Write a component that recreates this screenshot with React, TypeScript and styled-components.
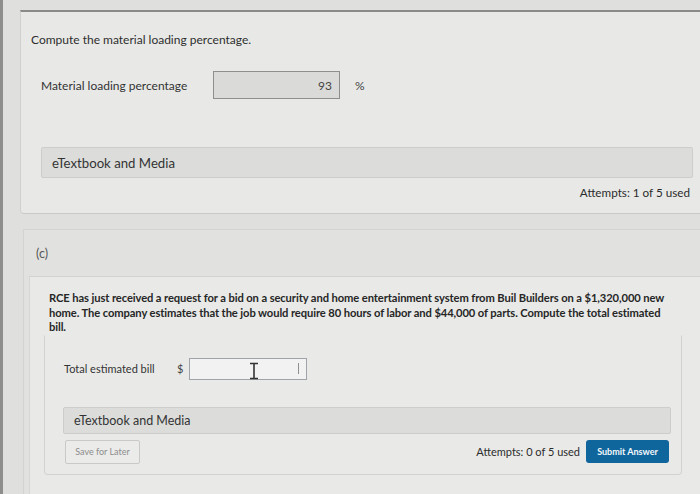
import React from "react";
import styled, { createGlobalStyle } from "styled-components";

const Global = createGlobalStyle`
  html, body { margin: 0; padding: 0; background: #dcdddb; }
  body { font-family: Lato, "Open Sans", "Liberation Sans", sans-serif; color: #2b2b2b; }
  * { box-sizing: border-box; }
`;

const Screen = styled.div`
  width: 700px;
  height: 494px;
  overflow: hidden;
  background: #dfe0de;
  border-left: 3px solid #8e8f8d;
  padding-top: 10px;
  display: flex;
  flex-direction: column;
`;

const PartCard = styled.section`
  margin-left: 17px;
  background: #e8e9e7;
  border-top: 2px solid #8a8b89;
  border-left: 1px solid #cfd0ce;
  border-bottom: 1px solid #c9cac8;
  border-bottom-left-radius: 4px;
  padding: 20px 0 14px 10px;
  display: flex;
  flex-direction: column;
`;

const Prompt = styled.p`
  margin: 0;
  font-size: 12px;
  line-height: 16px;
  color: #2e2e2e;
`;

const AnswerRow = styled.div<{ $indent?: number; $top?: number }>`
  display: flex;
  align-items: center;
  padding-left: ${(p) => p.$indent ?? 10}px;
  margin-top: ${(p) => p.$top ?? 0}px;
`;

const Label = styled.span<{ $w: number; $size?: number }>`
  width: ${(p) => p.$w}px;
  font-size: ${(p) => p.$size ?? 12}px;
  color: #333;
  flex-shrink: 0;
`;

const Unit = styled.span<{ $gap: number }>`
  margin: 0 ${(p) => p.$gap}px;
  font-size: 12px;
  color: #444;
`;

const NumBox = styled.div<{ $w: number; $h: number; $filled?: boolean }>`
  position: relative;
  width: ${(p) => p.$w}px;
  height: ${(p) => p.$h}px;
  background: ${(p) => (p.$filled ? "#dadbd9" : "#f1f2f1")};
  border: 1px solid ${(p) => (p.$filled ? "#8e8f8d" : "#9ea4a7")};
  display: flex;
  align-items: center;
  justify-content: flex-end;
  padding-right: 7px;
  font-size: 12px;
  color: #444;
`;

const Caret = styled.span`
  width: 1px;
  height: 11px;
  background: #8d8f90;
`;

const Cursor = styled.svg`
  position: absolute;
  left: 58px;
  top: 3px;
`;

const MediaBar = styled.div<{ $h: number; $size: number; $ml: number; $mr: number; $top: number }>`
  height: ${(p) => p.$h}px;
  margin-top: ${(p) => p.$top}px;
  margin-left: ${(p) => p.$ml}px;
  margin-right: ${(p) => p.$mr}px;
  background: #dcdddb;
  border: 1px solid #cdcecc;
  border-radius: 2px;
  display: flex;
  align-items: center;
  padding-left: 10px;
  font-size: ${(p) => p.$size}px;
  color: #333;
`;

const Attempts = styled.div<{ $size: number }>`
  font-size: ${(p) => p.$size}px;
  color: #2b2b2b;
  white-space: nowrap;
`;

const RightLine = styled.div`
  display: flex;
  justify-content: flex-end;
  padding-right: 10px;
  margin-top: 7px;
`;

const PartC = styled.section`
  margin-top: 15px;
  margin-left: 20px;
  flex: 1;
  background: #e1e2e0;
  border-top: 1px solid #d3d4d2;
  border-left: 1px solid #d3d4d2;
  display: flex;
  flex-direction: column;
`;

const PartLabel = styled.div`
  height: 46px;
  padding-left: 12px;
  display: flex;
  align-items: center;
  font-size: 12.5px;
  color: #555;
`;

const PartBody = styled.div`
  margin-left: 5px;
  background: #e9eae8;
  border-top: 1px solid #d2d3d1;
  border-left: 1px solid #d6d7d5;
  padding: 14px 0 0 0;
  display: flex;
  flex-direction: column;
  flex: 1;
`;

const Question = styled.p`
  margin: 0 0 0 19px;
  width: 622px;
  font-size: 11.2px;
  line-height: 14.5px;
  color: #262626;
  font-weight: 700;
  letter-spacing: -0.1px;
`;

const AnswerCard = styled.div`
  margin-left: 14px;
  width: 638px;
  border: 1px solid #d2d3d1;
  border-top-color: transparent;
  border-radius: 0 0 4px 4px;
  padding: 22px 10px 10px 18px;
  display: flex;
  flex-direction: column;
`;

const Footer = styled.div`
  display: flex;
  align-items: center;
  margin-top: 6px;
  padding-left: 2px;
`;

const SaveButton = styled.button`
  width: 75px;
  height: 24px;
  background: #ebebea;
  border: 1px solid #c9cac8;
  border-radius: 2px;
  font-family: inherit;
  font-size: 9px;
  color: #8d8d8d;
  padding: 0;
`;

const Spacer = styled.div`
  flex: 1;
`;

const SubmitButton = styled.button`
  margin-left: 6px;
  margin-right: 2px;
  width: 83px;
  height: 23px;
  background: #0f669d;
  border: none;
  border-radius: 3px;
  font-family: inherit;
  font-weight: 700;
  font-size: 9px;
  color: #f4f8fb;
  padding: 0;
`;

export default function App() {
  return (
    <>
      <Global />
      <Screen>
        <PartCard>
          <Prompt>Compute the material loading percentage.</Prompt>
          <AnswerRow $top={23}>
            <Label $w={172}>Material loading percentage</Label>
            <NumBox $w={127} $h={28} $filled>
              93
            </NumBox>
            <Unit $gap={15}>%</Unit>
          </AnswerRow>
          <MediaBar $h={31} $size={13.2} $ml={10} $mr={7} $top={48}>
            eTextbook and Media
          </MediaBar>
          <RightLine>
            <Attempts $size={11.7}>Attempts: 1 of 5 used</Attempts>
          </RightLine>
        </PartCard>
        <PartC>
          <PartLabel>(c)</PartLabel>
          <PartBody>
            <Question>
              RCE has just received a request for a bid on a security and home entertainment system from Buil
              Builders on a $1,320,000 new home. The company estimates that the job would require 80 hours of labor
              and $44,000 of parts. Compute the total estimated bill.
            </Question>
            <AnswerCard>
              <AnswerRow $indent={1}>
                <Label $w={113} $size={11}>
                  Total estimated bill
                </Label>
                <Unit $gap={0} style={{ width: 12, fontSize: 11 }}>
                  $
                </Unit>
                <NumBox $w={118} $h={22}>
                  <Caret />
                  <Cursor width="12" height="18" viewBox="0 0 12 18">
                    <path d="M2 1.5h8M6 1.5v15M2 16.5h8" stroke="#333" strokeWidth="1.6" fill="none" />
                  </Cursor>
                </NumBox>
              </AnswerRow>
              <MediaBar $h={27} $size={12.5} $ml={0} $mr={0} $top={27}>
                eTextbook and Media
              </MediaBar>
              <Footer>
                <SaveButton>Save for Later</SaveButton>
                <Spacer />
                <Attempts $size={11}>Attempts: 0 of 5 used</Attempts>
                <SubmitButton>Submit Answer</SubmitButton>
              </Footer>
            </AnswerCard>
          </PartBody>
        </PartC>
      </Screen>
    </>
  );
}
